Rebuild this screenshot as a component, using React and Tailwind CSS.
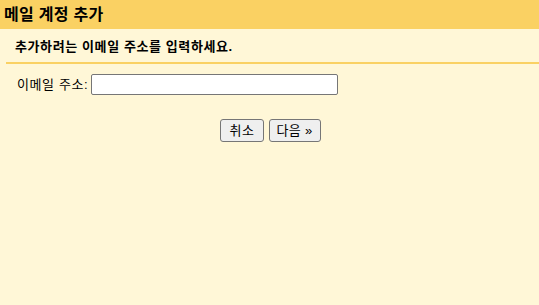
import React from 'react';

export default function App() {
  return (
    <div
      className="w-[539px] h-[305px] bg-[#fff7d7] text-black"
      style={{ fontFamily: '"Liberation Sans", "Noto Sans CJK KR", sans-serif' }}
    >
      {/* header */}
      <div className="h-[29px] bg-[#fad163] pl-[4px] flex items-center">
        <h1 className="text-[16px] font-bold leading-none tracking-[0.3px]">메일 계정 추가</h1>
      </div>

      <div className="pl-[6px]">
        <p className="pl-[9px] pt-[9px] pb-[7px] text-[13px] font-bold leading-[17px] tracking-[0.6px]">
          추가하려는 이메일 주소를 입력하세요.
        </p>
        <div className="h-[2px] bg-[#fad163]" />
      </div>

      <div className="pl-[17px] pt-[10px] flex items-center gap-[3px]">
        <label className="text-[13px] leading-none tracking-[0.6px]">이메일 주소:</label>
        <input
          type="text"
          className="w-[247px] h-[21px] bg-white border border-[#767676] rounded-[2px] px-1 text-[13px] outline-none"
        />
      </div>

      <div className="pt-[24px] flex justify-center gap-[5px] pl-[2px]">
        <button className="h-[23px] px-[8px] bg-[#efefef] border border-[#767676] rounded-[3px] text-[13px] leading-none tracking-[0.6px]">
          취소
        </button>
        <button className="h-[23px] px-[7px] bg-[#efefef] border border-[#767676] rounded-[3px] text-[13px] leading-none tracking-[0.3px]">
          다음 »
        </button>
      </div>
    </div>
  );
}
